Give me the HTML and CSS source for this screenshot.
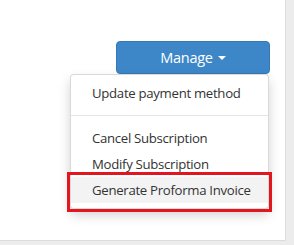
FILE: index.html
```html
<!DOCTYPE html>
<html lang="en">
  <head>
    <meta charset="UTF-8" />
    <meta name="viewport" content="width=device-width, initial-scale=1.0" />
    <title>Subscription</title>
    <link rel="stylesheet" href="styles.css">
  </head>
  <body>
    <div class="panel">
      <div class="actions">
        <div class="btn-group">
          <button type="button" class="manage-button">
            Manage <span class="caret"></span>
          </button>

          <ul class="dropdown-menu">
            <li><a href="#">Update payment method</a></li>
            <li class="divider"></li>
            <li><a href="#">Cancel Subscription</a></li>
            <li><a href="#">Modify Subscription</a></li>
            <li class="marked"><a href="#" class="active">Generate Proforma Invoice</a></li>
          </ul>
        </div>
      </div>
    </div>
  </body>
</html>
```

FILE: styles.css
```css
body {
  margin: 0;
  padding: 0;
  background: #ececec;
  font-family: "Open Sans", "Noto Sans", sans-serif;
  color: #333;
}

.panel {
  width: 285px;
  height: 240px;
  background: white;
  border-right: 1px solid #dcdcdc;
  border-bottom: 1px solid #dcdcdc;
}

.actions {
  display: flex;
  justify-content: flex-end;
  padding: 41px 15px 0 0;
}

.btn-group {
  position: relative;
}

.manage-button {
  width: 154px;
  height: 33px;
  background: #3d87c8;
  color: white;
  border: 1px solid #3679b4;
  border-radius: 4px;
  font-family: inherit;
  font-size: 14.5px;
  letter-spacing: -0.3px;
  cursor: pointer;
  display: flex;
  align-items: center;
  justify-content: center;
  gap: 5px;
}

.caret {
  display: inline-block;
  width: 0;
  height: 0;
  border-top: 4px solid white;
  border-left: 4px solid transparent;
  border-right: 4px solid transparent;
}

.dropdown-menu {
  position: absolute;
  top: 33px;
  right: 1px;
  width: 197px;
  margin: 0;
  padding: 5px 0;
  list-style: none;
  background: white;
  border: 1px solid rgba(0, 0, 0, 0.15);
  border-radius: 4px;
  box-shadow: 0 6px 12px rgba(0, 0, 0, 0.175);
}

.dropdown-menu a {
  display: block;
  padding: 3px 21px;
  line-height: 20px;
  font-size: 13.2px;
  letter-spacing: -0.3px;
  color: #333;
  text-decoration: none;
  white-space: nowrap;
}

.dropdown-menu a.active {
  background: #f3f3f3;
}

.divider {
  height: 1px;
  margin: 9px 0;
  background: #e5e5e5;
}

.marked {
  position: relative;
}

.marked::after {
  content: "";
  position: absolute;
  top: -5px;
  left: -4px;
  right: -4px;
  bottom: -9px;
  border: 3px solid #e3151f;
}
```
